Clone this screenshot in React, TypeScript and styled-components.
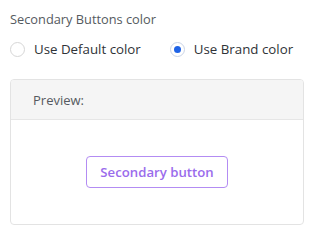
import styled, { createGlobalStyle } from 'styled-components';

const GlobalStyle = createGlobalStyle`
  body {
    margin: 0;
    background: #ffffff;
    font-family: 'Open Sans', 'Noto Sans', sans-serif;
  }
`;

const options = [
  { id: 'default', label: 'Use Default color', checked: false },
  { id: 'brand', label: 'Use Brand color', checked: true },
];

const App = () => {
  return (
    <>
      <GlobalStyle />
      <Wrapper>
        <Title>Secondary Buttons color</Title>
        <RadioRow>
          {options.map((option) => (
            <RadioLabel key={option.id}>
              <RadioCircle checked={option.checked} />
              {option.label}
            </RadioLabel>
          ))}
        </RadioRow>
        <PreviewBox>
          <PreviewHeader>Preview:</PreviewHeader>
          <PreviewBody>
            <SecondaryButton>Secondary button</SecondaryButton>
          </PreviewBody>
        </PreviewBox>
      </Wrapper>
    </>
  );
};

export default App;

const Wrapper = styled.div`
  padding: 10px 13px 0 10px;
  display: flex;
  flex-direction: column;
`;

const Title = styled.p`
  margin: 0;
  color: #555a60;
  font-size: 12.8px;
  line-height: 18px;
`;

const RadioRow = styled.div`
  display: flex;
  gap: 29px;
  margin-top: 11px;
`;

const RadioLabel = styled.label`
  display: flex;
  align-items: center;
  gap: 9px;
  white-space: nowrap;
  color: #2f3337;
  font-size: 13.3px;
  line-height: 20px;
`;

const RadioCircle = styled.span<{ checked: boolean }>`
  box-sizing: border-box;
  flex: none;
  width: 15px;
  height: 15px;
  border-radius: 50%;
  border: 1px solid ${({ checked }) => (checked ? '#c9d3e6' : '#d6d6d6')};
  background: #ffffff;
  display: flex;
  align-items: center;
  justify-content: center;
  &::after {
    content: '';
    display: ${({ checked }) => (checked ? 'block' : 'none')};
    width: 7px;
    height: 7px;
    border-radius: 50%;
    background: #1f63e6;
  }
`;

const PreviewBox = styled.div`
  margin-top: 20px;
  border: 1px solid #e3e3e3;
  border-radius: 4px;
  overflow: hidden;
`;

const PreviewHeader = styled.div`
  background: #f5f5f5;
  border-bottom: 1px solid #e6e6e6;
  height: 39px;
  padding-left: 22px;
  display: flex;
  align-items: center;
  color: #555a60;
  font-size: 13px;
`;

const PreviewBody = styled.div`
  height: 104px;
  display: flex;
  justify-content: center;
  align-items: center;
`;

const SecondaryButton = styled.button`
  box-sizing: border-box;
  width: 142px;
  height: 32px;
  border: 1px solid #b38cf3;
  border-radius: 4px;
  background: #ffffff;
  color: #9a6cec;
  font-family: 'Open Sans', 'Noto Sans', sans-serif;
  font-size: 13.2px;
  font-weight: 600;
`;
